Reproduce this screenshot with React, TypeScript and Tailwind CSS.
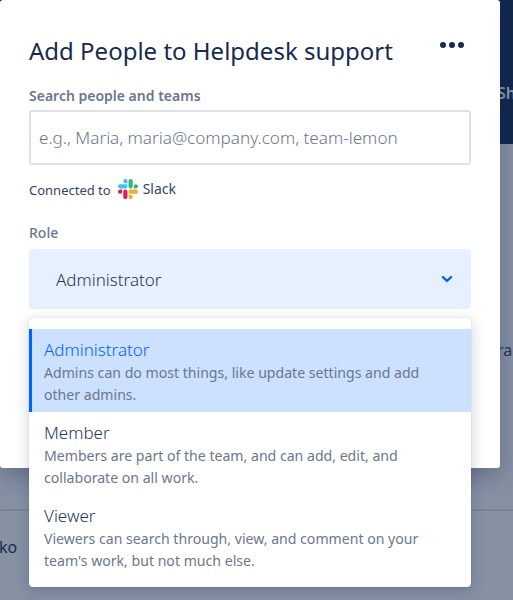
const font = { fontFamily: '"Noto Sans", sans-serif' }

const roles = [
  { name: "Administrator", lines: ["Admins can do most things, like update settings and add", "other admins."], selected: true },
  { name: "Member", lines: ["Members are part of the team, and can add, edit, and", "collaborate on all work."], selected: false },
  { name: "Viewer", lines: ["Viewers can search through, view, and comment on your", "team's work, but not much else."], selected: false },
]

function SlackLogo() {
  return (
    <svg width="20" height="20" viewBox="0 0 122.8 122.8">
      <path d="M25.8 77.6c0 7.1-5.8 12.9-12.9 12.9S0 84.7 0 77.6s5.8-12.9 12.9-12.9h12.9v12.9zm6.5 0c0-7.1 5.8-12.9 12.9-12.9s12.9 5.8 12.9 12.9v32.3c0 7.1-5.8 12.9-12.9 12.9s-12.9-5.8-12.9-12.9V77.6z" fill="#e01e5a" />
      <path d="M45.2 25.8c-7.1 0-12.9-5.8-12.9-12.9S38.1 0 45.2 0s12.9 5.8 12.9 12.9v12.9H45.2zm0 6.5c7.1 0 12.9 5.8 12.9 12.9s-5.8 12.9-12.9 12.9H12.9C5.8 58.1 0 52.3 0 45.2s5.8-12.9 12.9-12.9h32.3z" fill="#36c5f0" />
      <path d="M97 45.2c0-7.1 5.8-12.9 12.9-12.9s12.9 5.8 12.9 12.9-5.8 12.9-12.9 12.9H97V45.2zm-6.5 0c0 7.1-5.8 12.9-12.9 12.9s-12.9-5.8-12.9-12.9V12.9C64.7 5.8 70.5 0 77.6 0s12.9 5.8 12.9 12.9v32.3z" fill="#2eb67d" />
      <path d="M77.6 97c7.1 0 12.9 5.8 12.9 12.9s-5.8 12.9-12.9 12.9-12.9-5.8-12.9-12.9V97h12.9zm0-6.5c-7.1 0-12.9-5.8-12.9-12.9s5.8-12.9 12.9-12.9h32.3c7.1 0 12.9 5.8 12.9 12.9s-5.8 12.9-12.9 12.9H77.6z" fill="#ecb22e" />
    </svg>
  )
}

export default function App() {
  return (
    <div className="relative h-[600px] w-[513px] overflow-hidden bg-[#8791a4]" style={font}>
      {/* Page behind the blanket */}
      <div className="h-[144px] bg-[#14284e] pl-[497px] pt-[81px] text-base font-semibold text-[#8f99ab]">Sh</div>
      <div className="pl-[497px] pt-[194px] text-base text-[#253858]">ra</div>
      <div className="mt-[147px] border-t-2 border-[#78839a] pt-[24px] text-base text-[#172b4d]">
        <span className="-ml-[1px]">ko</span>
      </div>

      {/* Modal */}
      <div className="absolute left-0 top-0 h-[468px] w-[500px] rounded-[3px] bg-white px-[29px] pt-[19px] shadow-[0_8px_24px_rgba(9,30,66,0.3)]">
        <div className="flex items-start justify-between">
          <h1 className="text-2xl leading-[64px] text-[#172b4d]">Add People to Helpdesk support</h1>
          <div className="mr-[7px] mt-[23px] flex gap-[3px]">
            <span className="size-[6px] rounded-full bg-[#172b4d]" />
            <span className="size-[6px] rounded-full bg-[#172b4d]" />
            <span className="size-[6px] rounded-full bg-[#172b4d]" />
          </div>
        </div>
        <div className="mt-[3px] text-sm font-semibold leading-5 text-[#6b778c]">Search people and teams</div>
        <div className="mt-[4px] flex h-[55px] items-center rounded-[3px] border-2 border-[#dfe1e6] pl-2 pt-[1px] text-[17.1px] font-light text-[#6b778c]">
          e.g., Maria, maria@company.com, team-lemon
        </div>
        <div className="mt-[13px] flex items-center text-[13px] leading-5 text-[#344563]">
          <span className="mt-[2px]">Connected to</span>
          <span className="ml-[7px]"><SlackLogo /></span>
          <span className="ml-[5px] text-sm">Slack</span>
        </div>
        <div className="mt-[23px] text-sm font-medium leading-5 text-[#6b778c]">Role</div>
        <div className="mt-[6px] flex h-[60px] items-center justify-between rounded-[4px] bg-[#e6f0ff] pl-[27px] pr-[17px] text-[17px] font-light text-[#253858]">
          <span className="mt-[1px]">Administrator</span>
          <svg width="14" height="14" viewBox="0 0 14 14" fill="none">
            <path d="M3 5.2 7 9l4-3.8" stroke="#0065ff" strokeWidth="2.4" strokeLinecap="round" strokeLinejoin="round" />
          </svg>
        </div>
      </div>

      {/* Role menu */}
      <div className="absolute left-[29px] top-[318px] w-[442px] rounded-[4px] bg-white pt-[11px] pb-[9px] shadow-[0_0_1px_rgba(9,30,66,0.31),0_4px_16px_rgba(9,30,66,0.2)]">
        {roles.map((r) => (
          <div
            key={r.name}
            className={r.selected ? "h-[83px] border-l-[3px] border-[#0065ff] bg-[#cce0ff] pl-3 pt-[9px]" : "h-[83px] pl-[15px] pt-[9px]"}
          >
            <div className={r.selected ? "text-[17px] font-light leading-[23px] text-[#0065ff]" : "text-[17px] font-light leading-[23px] text-[#253858]"}>{r.name}</div>
            <div className="mt-[1px] text-[14.1px] leading-[22px] text-[#6b778c]">
              {r.lines.map((l) => (
                <div key={l}>{l}</div>
              ))}
            </div>
          </div>
        ))}
      </div>
    </div>
  )
}
